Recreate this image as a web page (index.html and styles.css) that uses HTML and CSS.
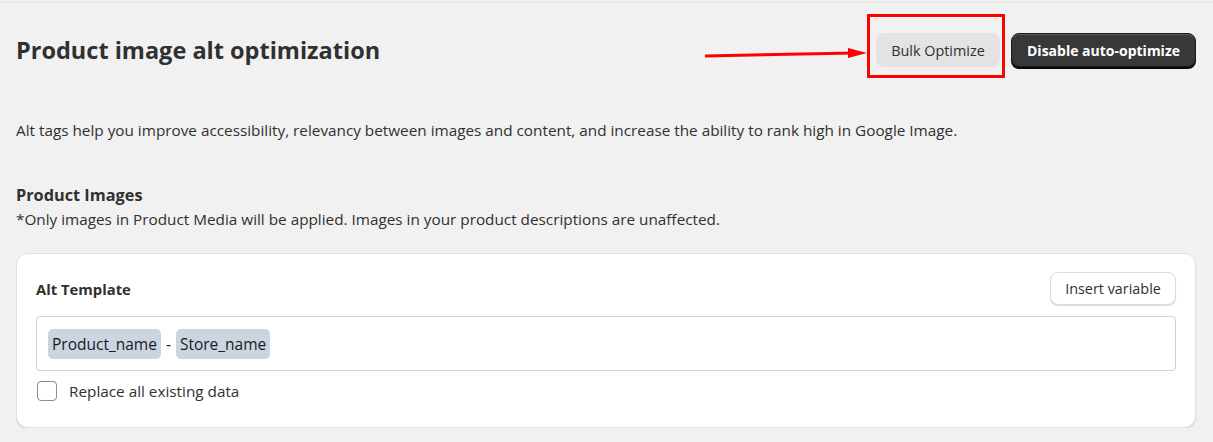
FILE: index.html
```html
<!DOCTYPE html>
<html lang="en">
<head>
    <meta charset="UTF-8">
    <meta name="viewport" content="width=device-width, initial-scale=1.0">
    <title>Product image alt optimization</title>
    <link rel="stylesheet" href="styles.css">
</head>
<body>
    <div class="page">
        <header class="page-header">
            <h1 class="page-title">Product image alt optimization</h1>
            <div class="actions">
                <div class="highlight">
                    <svg class="arrow" width="165" height="14" viewBox="0 0 165 14">
                        <line x1="1" y1="9" x2="150" y2="6" stroke="#ff0000" stroke-width="3"/>
                        <polygon points="144,1 163,6 144,11" fill="#ff0000"/>
                    </svg>
                    <div class="highlight-box"></div>
                    <button class="btn btn-secondary">Bulk Optimize</button>
                </div>
                <button class="btn btn-primary">Disable auto-optimize</button>
            </div>
        </header>

        <p class="intro">Alt tags help you improve accessibility, relevancy between images and content, and increase the ability to rank high in Google Image.</p>

        <section class="section">
            <h2 class="section-title">Product Images</h2>
            <p class="section-note">*Only images in Product Media will be applied. Images in your product descriptions are unaffected.</p>

            <div class="card">
                <div class="card-head">
                    <h3 class="card-title">Alt Template</h3>
                    <button class="btn btn-outline">Insert variable</button>
                </div>
                <div class="template-input">
                    <span class="chip">Product_name</span>
                    <span class="sep">-</span>
                    <span class="chip">Store_name</span>
                </div>
                <label class="check">
                    <span class="check-box"></span>
                    Replace all existing data
                </label>
            </div>
        </section>
    </div>
</body>
</html>
```

FILE: styles.css
```css
* {
    margin: 0;
    padding: 0;
    box-sizing: border-box;
}

body {
    background-color: #f1f1f1;
    color: #303030;
    font-family: "Open Sans", "Noto Sans", sans-serif;
    font-size: 15.3px;
}

.page {
    margin-top: 2px;
    border-top: 1px solid #e6e6e6;
    padding: 0 17px 0 16px;
}

.page-header {
    display: flex;
    justify-content: space-between;
    align-items: center;
    height: 94px;
}

.page-title {
    font-size: 23.5px;
    font-weight: 700;
    color: #303030;
}

.actions {
    display: flex;
    align-items: center;
    gap: 11px;
}

.highlight {
    position: relative;
}

.highlight-box {
    position: absolute;
    left: -9px;
    top: -19px;
    width: 138px;
    height: 64px;
    border: 3px solid #ff0000;
}

.arrow {
    position: absolute;
    left: -172px;
    top: 14px;
}

.btn {
    font-family: inherit;
    font-size: 14.4px;
    border: none;
    border-radius: 8px;
    height: 34px;
    cursor: pointer;
}

.btn-secondary {
    width: 124px;
    background-color: #e3e3e3;
    color: #303030;
}

.btn-primary {
    width: 185px;
    font-size: 14px;
    background-color: #383838;
    color: #ffffff;
    font-weight: 700;
    box-shadow: inset 0 1px 0 #5a5a5a, 0 2px 0 #0a0a0a;
    border: 1px solid #1a1a1a;
}

.intro {
    margin-top: 22px;
    line-height: 22px;
}

.section {
    margin-top: 42px;
}

.section-title {
    font-size: 16.3px;
    font-weight: 700;
    line-height: 24px;
}

.section-note {
    line-height: 24px;
}

.card {
    margin-top: 22px;
    background-color: #ffffff;
    border-radius: 12px;
    border: 1px solid #e1e1e1;
    box-shadow: 0 1px 1px rgba(0, 0, 0, 0.12);
    padding: 18px 19px 26px 19px;
}

.card-head {
    display: flex;
    justify-content: space-between;
    align-items: center;
}

.card-title {
    font-size: 14.8px;
    font-weight: 700;
}

.btn-outline {
    width: 126px;
    height: 33px;
    background-color: #ffffff;
    color: #303030;
    border: 1px solid #dcdcdc;
    box-shadow: 0 1px 1px rgba(0, 0, 0, 0.15);
}

.template-input {
    margin-top: 11px;
    height: 55px;
    border: 1px solid #d3d3d3;
    border-radius: 4px;
    display: flex;
    align-items: center;
    gap: 5px;
    padding: 0 11px;
    font-size: 15.5px;
}

.chip {
    background-color: #c9d5e0;
    border-radius: 5px;
    padding: 0 4px;
    height: 30px;
    line-height: 30px;
    color: #1a1a1a;
}

.sep {
    color: #1a1a1a;
}

.check {
    margin-top: 10px;
    display: flex;
    align-items: center;
    gap: 12px;
    padding-left: 1px;
    line-height: 20px;
}

.check-box {
    width: 20px;
    height: 20px;
    border: 1px solid #8a8a8a;
    border-radius: 4px;
}
```
